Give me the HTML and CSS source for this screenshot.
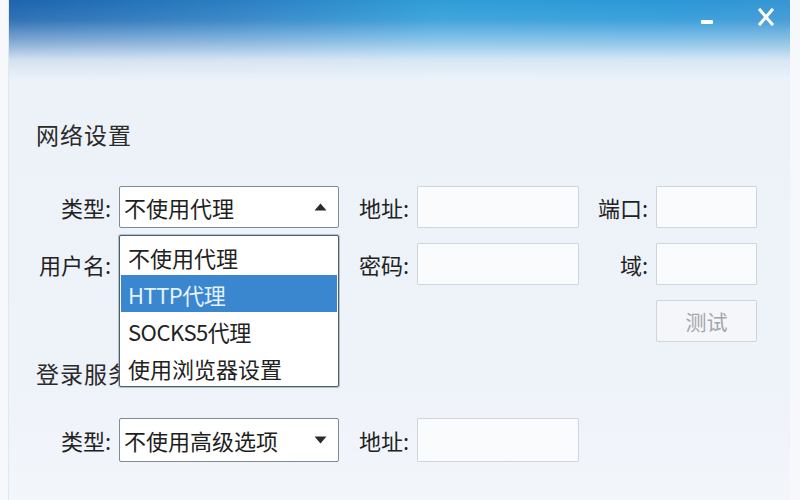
FILE: index.html
```html
<!DOCTYPE html>
<html lang="zh-CN">
<head>
<meta charset="utf-8">
<title>网络设置</title>
<link rel="stylesheet" href="styles.css">
</head>
<body>
<div class="window">
  <div class="titlebar">
    <div class="controls">
      <span class="btn-min" aria-label="最小化"></span>
      <svg class="btn-close" width="16" height="18" viewBox="0 0 16 18" aria-label="关闭">
        <path d="M2 2 L14 16 M14 2 L2 16" stroke="#ffffff" stroke-width="3" stroke-linecap="square" fill="none"/>
      </svg>
    </div>
  </div>

  <section class="section">
    <h2 class="heading">网络设置</h2>
    <div class="form-grid net-grid">
      <label class="lbl">类型:</label>
      <div class="select open">
        <span class="select-text">不使用代理</span>
        <svg class="arrow" width="13" height="8" viewBox="0 0 13 8"><path d="M0.5 7.5 L6.5 0.5 L12.5 7.5 Z" fill="#2b2b2b"/></svg>
        <ul class="dropdown">
          <li class="opt">不使用代理</li>
          <li class="opt selected">HTTP代理</li>
          <li class="opt">SOCKS5代理</li>
          <li class="opt">使用浏览器设置</li>
        </ul>
      </div>
      <label class="lbl">地址:</label>
      <div class="input"></div>
      <label class="lbl">端口:</label>
      <div class="input"></div>

      <label class="lbl">用户名:</label>
      <div class="spacer"></div>
      <label class="lbl">密码:</label>
      <div class="input"></div>
      <label class="lbl">域:</label>
      <div class="input"></div>

      <div class="spacer"></div>
      <div class="spacer"></div>
      <div class="spacer"></div>
      <div class="spacer"></div>
      <div class="spacer"></div>
      <button class="btn-test">测试</button>
    </div>
  </section>

  <section class="section section-login">
    <h2 class="heading">登录服务器</h2>
    <div class="form-grid login-grid">
      <label class="lbl">类型:</label>
      <div class="select">
        <span class="select-text">不使用高级选项</span>
        <svg class="arrow" width="13" height="8" viewBox="0 0 13 8"><path d="M0.5 0.5 L6.5 7.5 L12.5 0.5 Z" fill="#2b2b2b"/></svg>
      </div>
      <label class="lbl">地址:</label>
      <div class="input"></div>
    </div>
  </section>
</div>
</body>
</html>
```

FILE: styles.css
```css
* { box-sizing: border-box; }

html, body {
  margin: 0;
  padding: 0;
}

body {
  width: 800px;
  height: 500px;
  overflow: hidden;
  background: #f6f8fb;
  font-family: "Noto Sans CJK SC", "Noto Sans", sans-serif;
  color: #222;
}

.window {
  margin-left: 8px;
  width: 782px;
  height: 500px;
  border-left: 1px solid #e2e8ef;
  background:
    linear-gradient(to bottom,
      rgba(237, 242, 249, 0) 0,
      rgba(237, 242, 249, 0.1) 20px,
      rgba(237, 242, 249, 0.5) 42px,
      rgba(237, 242, 249, 0.88) 60px,
      #edf2f9 80px,
      #eef2f9 380px,
      #f3f6fb 500px),
    linear-gradient(to right, #1c64ad 0, #2a7fc3 30%, #2f9dd8 55%, #2a98d8 85%, #3595d2 100%);
}

.titlebar {
  height: 119px;
}

.controls {
  display: flex;
  justify-content: flex-end;
  align-items: flex-start;
  gap: 45px;
  padding: 8px 16px 0 0;
}

.btn-min {
  display: block;
  width: 12px;
  height: 4px;
  margin-top: 12px;
  background: #ffffff;
  border-radius: 1px;
}

.btn-close {
  display: block;
}

.section {
  padding-left: 27px;
}

.heading {
  margin: 0;
  font-size: 23px;
  font-weight: normal;
  line-height: 30px;
  color: #2a2a2a;
  letter-spacing: 1px;
}

.form-grid {
  display: grid;
  grid-template-columns: 83px 220px 78px 162px 77px 101px;
  grid-auto-rows: 42px;
  row-gap: 15px;
}

.net-grid {
  margin-top: 37px;
}

.section-login {
  margin-top: 16px;
}

.login-grid {
  margin-top: 30px;
  grid-template-columns: 83px 220px 78px 162px;
  grid-auto-rows: 44px;
}

.lbl {
  align-self: center;
  text-align: right;
  padding-right: 8px;
  font-size: 22px;
  line-height: 28px;
  color: #222;
  white-space: nowrap;
}

.select {
  position: relative;
  display: flex;
  align-items: center;
  justify-content: space-between;
  padding: 0 11px 0 4px;
  background: #ffffff;
  border: 1px solid #7f8b96;
  border-radius: 2px;
  font-size: 22px;
  color: #1e1e1e;
}

.select-text {
  line-height: 28px;
}

.arrow {
  display: block;
}

.dropdown {
  position: absolute;
  left: -1px;
  top: 48px;
  width: 220px;
  height: 152px;
  margin: 0;
  padding: 2px 1px;
  list-style: none;
  background: #ffffff;
  border: 1px solid #4c5f71;
  box-shadow: 0 0 0 1px rgba(110, 130, 150, 0.45);
  border-radius: 2px;
  z-index: 5;
}

.opt {
  height: 37px;
  padding-left: 7px;
  display: flex;
  align-items: center;
  font-size: 22px;
  color: #222;
}

.opt.selected {
  background: #3a86cf;
  color: #e4f2ff;
  letter-spacing: -0.5px;
}

.opt:nth-child(3) {
  letter-spacing: -0.5px;
}

.input {
  background: #f9fbfd;
  border: 1px solid #cfd5dc;
  border-radius: 1px;
}

.btn-test {
  font-family: inherit;
  font-size: 21px;
  color: #a3a7ac;
  background: #f4f6f9;
  border: 1px solid #cfd5dc;
  border-radius: 2px;
  padding: 0;
}
```
